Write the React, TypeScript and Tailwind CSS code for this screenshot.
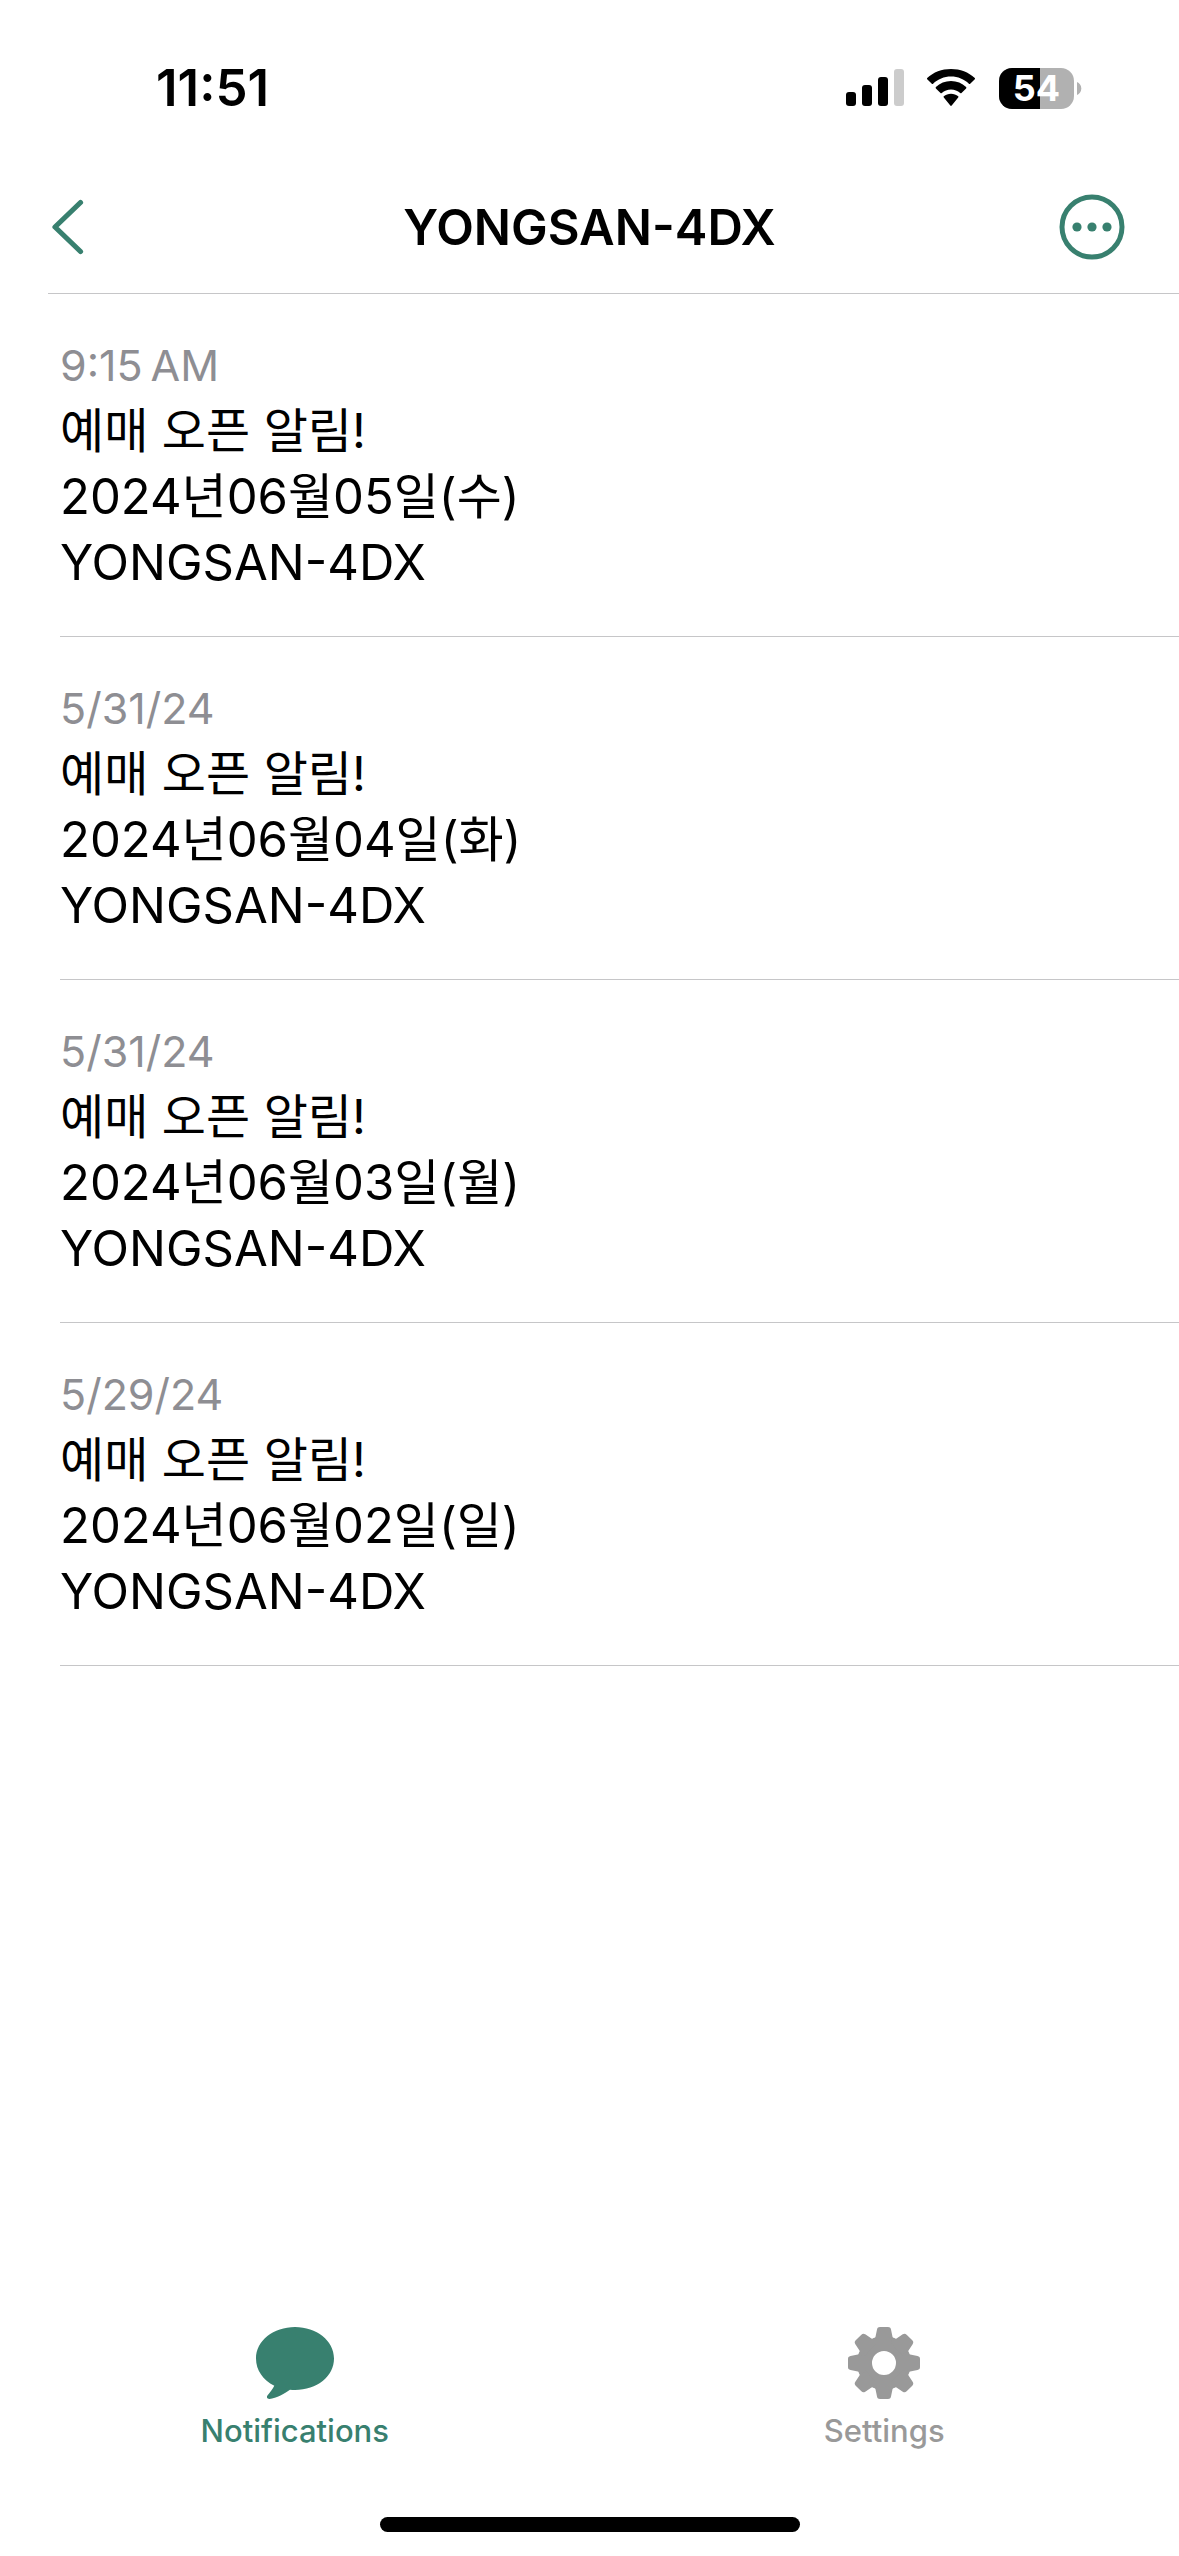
const notifications = [
  { time: '9:15\u2009AM', date: '2024년06월05일(수)' },
  { time: '5/31/24', date: '2024년06월04일(화)' },
  { time: '5/31/24', date: '2024년06월03일(월)' },
  { time: '5/29/24', date: '2024년06월02일(일)' },
];

const toothAngles = [0, 45, 90, 135, 180, 225, 270, 315];

function SignalIcon() {
  return (
    <svg width="58" height="38" viewBox="0 0 58 38" aria-hidden="true">
      <rect x="0" y="23" width="10" height="14" rx="3" />
      <rect x="16" y="16" width="10" height="21" rx="3" />
      <rect x="32" y="8" width="10" height="29" rx="3" />
      <rect x="48" y="0" width="10" height="37" rx="3" fill="#cccccc" />
    </svg>
  );
}

function WifiIcon() {
  return (
    <svg width="52" height="38" viewBox="0 0 52 38" aria-hidden="true">
      <path d="M26 7.6c6.9 0 13.2 2.700 17.900 7.200.4.400.9.400 1.300 0l4.600-4.500c.4-.4.400-1 0-1.400C43.600 3.300 35.200 0 26 0S8.400 3.300 2.200 8.900c-.4.400-.4 1 0 1.400l4.600 4.500c.4.400.900.400 1.300 0C12.800 10.300 19.100 7.600 26 7.600z" />
      <path d="M26 20.400c3.500 0 6.700 1.300 9.200 3.500.4.400.900.400 1.300 0l4.600-4.500c.4-.4.400-1 0-1.400-4-3.700-9.300-5.900-15.100-5.900s-11.100 2.200-15.100 5.900c-.4.400-.4 1 0 1.400l4.600 4.500c.4.400.900.400 1.300 0 2.500-2.200 5.700-3.500 9.200-3.500z" />
      <path d="M33.200 28.600c.4-.4.400-1 0-1.300-1.900-1.600-4.500-2.600-7.200-2.600s-5.300 1-7.200 2.600c-.4.300-.4.900 0 1.300l6.500 7.900c.4.500 1 .5 1.400 0z" />
    </svg>
  );
}

function Battery() {
  return (
    <div className="flex items-center gap-[3px]" role="img" aria-label="Battery 54 percent">
      <div className="relative flex h-[41px] w-[75px] items-center justify-center rounded-[13px] bg-[#b1b1b1]">
        <div className="absolute inset-y-0 left-0 w-[41px] rounded-l-[13px] bg-black" />
        <span className="relative text-[36px] leading-[41px] font-bold text-white">54</span>
      </div>
      <svg width="5" height="13" viewBox="0 0 5 13" aria-hidden="true">
        <path d="M0 0C2.500 1 4.300 3.500 4.300 6.500S2.500 12 0 13z" fill="#b1b1b1" />
      </svg>
    </div>
  );
}

function BackIcon() {
  return (
    <svg width="32" height="56" viewBox="0 0 32 56" fill="none" stroke="#38806f" strokeWidth="5.200" strokeLinecap="round" strokeLinejoin="round" aria-hidden="true">
      <path d="M28.500 3.500L3 28l25.500 24.500" />
    </svg>
  );
}

function MoreIcon() {
  return (
    <svg width="66" height="66" viewBox="0 0 66 66" fill="#38806f" aria-hidden="true">
      <circle cx="33" cy="33" r="30" fill="none" stroke="#38806f" strokeWidth="5" />
      <circle cx="18" cy="33" r="4.600" />
      <circle cx="33" cy="33" r="4.600" />
      <circle cx="48" cy="33" r="4.600" />
    </svg>
  );
}

function BubbleIcon() {
  return (
    <svg width="78" height="72" viewBox="0 0 78 72" fill="currentColor" aria-hidden="true">
      <path d="M39 0C60.500 0 78 13.800 78 31.500S61 63 39 63c-1.800 0-3.300-.100-5-.2C29.500 66 20 71.800 13.500 71.900c-2.400.100-3.300-1.900-1.900-3.600C14 65.400 17 61.500 18.300 58.800 7 53 0 43.200 0 31.500 0 13.800 17.500 0 39 0z" />
    </svg>
  );
}

function GearIcon() {
  return (
    <svg width="72" height="72" viewBox="0 0 72 72" fill="currentColor" aria-hidden="true">
      <circle cx="36" cy="36" r="19.500" fill="none" stroke="currentColor" strokeWidth="15" />
      {toothAngles.map((angle) => (
        <path
          key={angle}
          d="M24 12.600C26.300 12 27.200 11.300 27.500 9.800L29 2.500C29.400.700 30.300 0 32 0h8c1.700 0 2.600.700 3 2.500l1.500 7.300c.3 1.500 1.200 2.200 3.500 2.800L45 17H27z"
          transform={`rotate(${angle} 36 36)`}
        />
      ))}
    </svg>
  );
}

export default function App() {
  return (
    <div className="flex min-h-screen flex-col bg-white font-['Inter','Noto_Sans_CJK_KR',sans-serif] text-black">
      <div className="flex h-[162px] items-start justify-between pt-[58px] pr-[97px] pl-[156px]">
        <time className="text-[51px] leading-[60px] font-semibold">11:51</time>
        <div className="flex h-[60px] items-center">
          <SignalIcon />
          <div className="mr-[22px] ml-[21px]">
            <WifiIcon />
          </div>
          <Battery />
        </div>
      </div>

      <header className="ml-12 grid h-[132px] grid-cols-[1fr_auto_1fr] items-center border-b border-[#c6c6c8] pr-12">
        <button type="button" aria-label="Back" className="justify-self-start pb-0.5 pl-1">
          <BackIcon />
        </button>
        <h1 className="text-[49px] leading-[60px] font-semibold">YONGSAN-4DX</h1>
        <button type="button" aria-label="More options" className="justify-self-end pr-1.5 pb-0.5">
          <MoreIcon />
        </button>
      </header>

      <main className="flex-1">
        <ul className="ml-[60px]">
          {notifications.map((item) => (
            <li key={item.date} className="border-b border-[#c6c6c8] pt-[38px] pb-10">
              <time className="block text-[43px] leading-[66px] text-[#8e8e93]">{item.time}</time>
              <p className="text-[48px] leading-[66px]">예매 오픈 알림!</p>
              <p className="text-[49px] leading-[66px]">{item.date}</p>
              <p className="text-[49px] leading-[66px]">YONGSAN-4DX</p>
            </li>
          ))}
        </ul>
      </main>

      <nav className="grid grid-cols-2" aria-label="Main">
        <button type="button" aria-current="page" className="flex flex-col items-center gap-3 text-[#38806f]">
          <BubbleIcon />
          <span className="text-[31px] leading-[40px] font-medium">Notifications</span>
        </button>
        <button type="button" className="flex flex-col items-center gap-3 text-[#999999]">
          <GearIcon />
          <span className="text-[31px] leading-[40px] font-medium">Settings</span>
        </button>
      </nav>

      <div className="flex justify-center pt-[66px] pb-6">
        <div className="h-[15px] w-[420px] rounded-full bg-black" />
      </div>
    </div>
  );
}
